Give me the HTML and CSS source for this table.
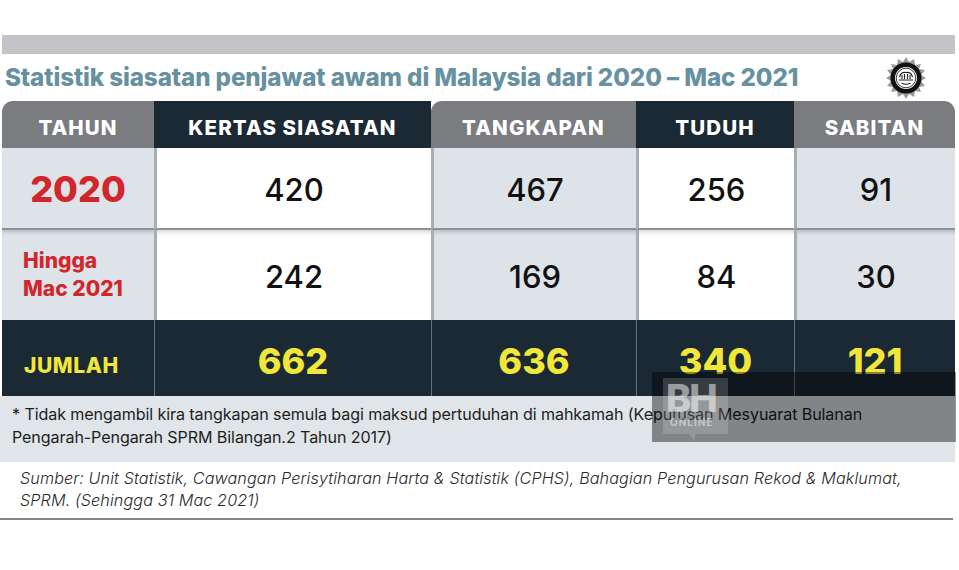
FILE: index.html
```html
<!DOCTYPE html>
<html lang="ms">
<head>
<meta charset="utf-8">
<title>Statistik siasatan penjawat awam</title>
<link rel="stylesheet" href="styles.css">
</head>
<body>
<div class="page">
  <div class="topbar"></div>
  <div class="titlerow">
    <h1 class="title">Statistik siasatan penjawat awam di Malaysia dari 2020 – Mac 2021</h1>
    <svg class="logo" width="44" height="44" viewBox="0 0 44 44">
      <polygon fill="#9a9a9a" points="22,1 25,6 30,3 31,9 37,8 35,13 41,14 37,19 42,22 37,25 41,30 35,31 37,36 31,35 30,41 25,38 22,43 19,38 14,41 13,35 7,36 9,31 3,30 7,25 2,22 7,19 3,14 9,13 7,8 13,9 14,3 19,6"/>
      <circle cx="22" cy="22" r="15.5" fill="#111"/>
      <circle cx="22" cy="22" r="11" fill="#fff"/>
      <circle cx="22" cy="22" r="9.8" fill="none" stroke="#222" stroke-width="0.9"/>
      <path d="M15.5 21 Q17 15.5 22 16.5 Q27 15.5 28.5 21 M15 24 L29 24 M17.5 27 Q22 29.5 26.5 27 M18 19 L18 23 M20.5 18 L20.5 23 M23.5 18 L23.5 23 M26 19 L26 23" fill="none" stroke="#222" stroke-width="1.1"/>
    </svg>
  </div>

  <div class="table">
    <div class="th grey first">TAHUN</div>
    <div class="th dark">KERTAS SIASATAN</div>
    <div class="th grey round-l">TANGKAPAN</div>
    <div class="th dark">TUDUH</div>
    <div class="th grey round-r">SABITAN</div>

    <div class="td lead year shade">2020</div>
    <div class="td num white">420</div>
    <div class="td num shade">467</div>
    <div class="td num white">256</div>
    <div class="td num shade">91</div>

    <div class="td lead year2 shade r2">Hingga<br>Mac 2021</div>
    <div class="td num white r2">242</div>
    <div class="td num shade r2">169</div>
    <div class="td num white r2">84</div>
    <div class="td num shade r2">30</div>

    <div class="tf label">JUMLAH</div>
    <div class="tf total">662</div>
    <div class="tf total">636</div>
    <div class="tf total">340</div>
    <div class="tf total">121</div>
  </div>

  <div class="note">
    <p>* Tidak mengambil kira tangkapan semula bagi maksud pertuduhan di mahkamah (Keputusan Mesyuarat Bulanan<br>Pengarah-Pengarah SPRM Bilangan.2 Tahun 2017)</p>
  </div>
  <div class="source">
    <p>Sumber: Unit Statistik, Cawangan Perisytiharan Harta &amp; Statistik (CPHS), Bahagian Pengurusan Rekod &amp; Maklumat,<br>SPRM. (Sehingga 31 Mac 2021)</p>
  </div>

  <div class="watermark">
    <div class="bh">
      <span class="bh-big">BH</span>
      <span class="bh-small">ONLINE</span>
      <span class="bh-tail"></span>
    </div>
  </div>
</div>
</body>
</html>
```

FILE: styles.css
```css
html, body {
  margin: 0;
  padding: 0;
  background: #ffffff;
}
body {
  font-family: "Inter", "DejaVu Sans", sans-serif;
}
.page {
  position: relative;
  width: 959px;
  height: 570px;
  overflow: hidden;
  padding-top: 35px;
  box-sizing: border-box;
}
.topbar {
  margin-left: 2px;
  width: 953px;
  height: 19px;
  background: #c3c4c8;
}
.titlerow {
  height: 47px;
  display: flex;
  align-items: center;
  justify-content: space-between;
  padding: 0 31px 0 5px;
}
.title {
  margin: 0;
  font-size: 24.2px;
  font-weight: 800;
  color: #6790a0;
  letter-spacing: -0.1px;
  line-height: 1;
  padding-top: 1px;
}
.logo {
  display: block;
  margin-top: 1px;
}

.table {
  margin-left: 2px;
  width: 953px;
  display: grid;
  grid-template-columns: 152px 277px 205px 158px 161px;
  grid-template-rows: 47px 82px 90px 76px;
}
.th {
  display: flex;
  align-items: center;
  justify-content: center;
  color: #ffffff;
  font-weight: 800;
  font-size: 20.5px;
  letter-spacing: 1.1px;
  padding-top: 6px;
  box-sizing: border-box;
}
.th.grey { background: #7b7c80; }
.th.dark { background: #1b2935; }
.th.first { border-top-left-radius: 11px; }
.th.round-l { border-top-left-radius: 11px; }
.th.round-r { border-top-right-radius: 11px; }

.td {
  display: flex;
  align-items: center;
  justify-content: center;
  border-bottom: 2px solid #8c9398;
  border-left: 3px solid #a9aeb3;
  box-sizing: border-box;
}
.td.lead { border-left: none; }
.td.r2 {
  border-bottom: none;
  box-shadow: inset 0 5px 4px -3px rgba(0, 0, 0, 0.18);
}
.shade { background: #dde3e8; }
.white { background: #ffffff; }
.num {
  font-size: 31px;
  font-weight: 500;
  color: #111111;
  padding-top: 2px;
}
.year {
  color: #d2262d;
  font-size: 36px;
  font-weight: 800;
  padding-top: 2px;
}
.year2 {
  color: #d2262d;
  font-size: 21px;
  font-weight: 800;
  line-height: 28px;
  justify-content: flex-start;
  padding-left: 21px;
}

.tf {
  background: #1b2935;
  display: flex;
  align-items: center;
  justify-content: center;
  color: #f1e63a;
  font-weight: 800;
}
.tf + .tf { border-left: 1px solid #66737d; }
.tf.label {
  font-size: 21px;
  letter-spacing: 0.6px;
  justify-content: flex-start;
  padding-left: 22px;
  padding-top: 14px;
}
.tf.total {
  font-size: 36px;
  padding-top: 6px;
}

.note {
  width: 955px;
  height: 66px;
  background: #dfe5e9;
  box-sizing: border-box;
  padding: 7px 0 0 12px;
}
.note p {
  margin: 0;
  font-size: 16.1px;
  line-height: 23px;
  color: #1e1e1e;
  letter-spacing: -0.1px;
}
.source {
  width: 953px;
  height: 58px;
  box-sizing: border-box;
  padding: 5px 0 0 20px;
  border-bottom: 2px solid #858585;
}
.source p {
  margin: 0;
  font-size: 16.2px;
  line-height: 22px;
  font-style: italic;
  font-weight: 300;
  color: #2a2a2a;
  letter-spacing: 0.1px;
}

.watermark {
  position: absolute;
  left: 652px;
  top: 372px;
  width: 304px;
  height: 70px;
  background: rgba(0, 0, 0, 0.42);
}
.bh {
  position: absolute;
  left: 11px;
  top: 6px;
  width: 65px;
  height: 56px;
  background: rgba(255, 255, 255, 0.16);
}
.bh-big {
  position: absolute;
  left: 3px;
  top: 0;
  font-size: 38px;
  font-weight: 800;
  line-height: 40px;
  letter-spacing: -2px;
  color: rgba(255, 255, 255, 0.5);
}
.bh-small {
  position: absolute;
  left: 7px;
  top: 38px;
  font-size: 10px;
  font-weight: 700;
  letter-spacing: 1px;
  color: rgba(255, 255, 255, 0.45);
}
.bh-tail {
  position: absolute;
  left: 26px;
  top: 56px;
  width: 0;
  height: 0;
  border-left: 6px solid transparent;
  border-top: 7px solid rgba(255, 255, 255, 0.16);
}
```
